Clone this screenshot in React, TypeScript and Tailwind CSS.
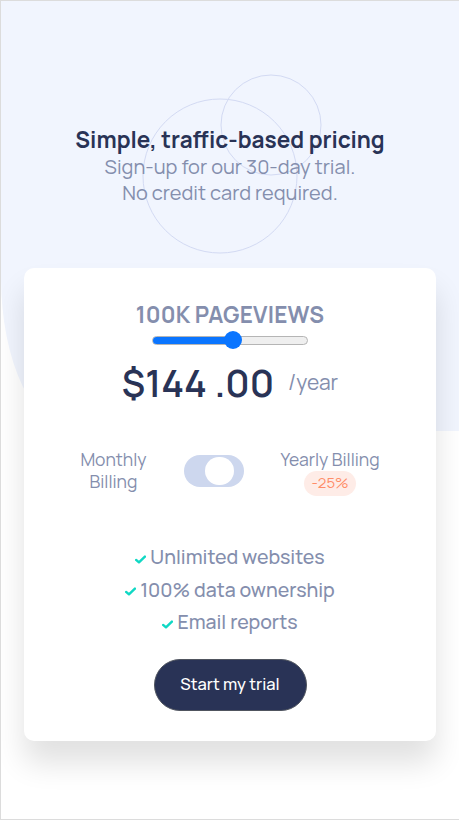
import { useState } from 'react';

const features = ['Unlimited websites', '100% data ownership', 'Email reports'];

// small teal tick used before each feature line
const Check = () => (
  <svg width="11" height="9" viewBox="0 0 10 8" className="mr-[4px] mt-[4px] shrink-0">
    <path d="M1 4.4 L3.6 6.6 L9 1.4" fill="none" stroke="#10d8c4" strokeWidth="2.2" strokeLinecap="round" strokeLinejoin="round" />
  </svg>
);

const App = () => {
  const [yearly, setYearly] = useState(true);
  const progress = 52;

  return (
    <div className="relative min-h-[820px] w-full overflow-hidden border-t border-l border-b border-[#dcdcdc] bg-white font-['Manrope','Inter',sans-serif]">
      {/* background shape + circles */}
      <div className="absolute left-0 right-0 top-0 h-[430px] rounded-bl-[74px_153px] bg-[#f1f5fe]" />
      <svg className="absolute left-0 top-0" width="459" height="300">
        <circle cx="270" cy="124" r="50" fill="none" stroke="#d3daf3" strokeWidth="1" />
        <circle cx="219" cy="175" r="77" fill="none" stroke="#d3daf3" strokeWidth="1" />
      </svg>

      <div className="relative flex flex-col items-center">
        {/* header */}
        <div className="mt-[125px] flex flex-col items-center text-center">
          <h1 className="text-[22.5px] font-bold leading-[28px] text-[#293356]">Simple, traffic-based pricing</h1>
          <p className="text-[20px] leading-[26px] text-[#848ead]">
            Sign-up for our 30-day trial.
            <br />
            No credit card required.
          </p>
        </div>

        {/* card */}
        <div className="mt-[62px] flex w-[412px] flex-col items-center rounded-[10px] bg-white pb-[30px] pt-[32px] shadow-[0_22px_30px_rgba(0,0,0,0.12)]">
          <div className="text-[22.5px] font-bold leading-[30px] tracking-[0.2px] text-[#848ead]">100K PAGEVIEWS</div>

          <div className="relative mt-[1px] flex h-[18px] w-[156px] items-center">
            <div className="flex h-[9px] w-full overflow-hidden rounded-full border border-[#b5b5b5] bg-[#efefef]">
              <div className="h-full bg-[#0a75ff]" style={{ width: `${progress}%` }} />
            </div>
            <div
              className="absolute top-0 h-[18px] w-[18px] -translate-x-1/2 rounded-full bg-[#0a75ff]"
              style={{ left: `${progress}%` }}
            />
          </div>

          <div className="mt-[9px] flex items-center">
            <span className="text-[38px] font-semibold leading-[48px] text-[#293356]">$144 .00</span>
            <span className="ml-[14px] mt-[1px] text-[21px] text-[#848ead]">/year</span>
          </div>

          {/* billing toggle */}
          <div className="mt-[42px] flex items-start gap-[37px]">
            <span className="text-center text-[17.5px] leading-[22px] text-[#848ead]">
              Monthly
              <br />
              Billing
            </span>
            <button
              onClick={() => setYearly(!yearly)}
              className="mt-[7px] flex h-[32px] w-[60px] items-center rounded-full bg-[#cdd7ee] pl-[21px]"
            >
              <span className={`h-[28px] w-[29px] rounded-full bg-white ${yearly ? '' : '-ml-[16px]'}`} />
            </button>
            <div className="flex flex-col items-center">
              <span className="text-[17.5px] leading-[22px] text-[#848ead]">Yearly Billing</span>
              <span className="mt-[1px] flex h-[25px] w-[52px] items-center justify-center rounded-full bg-[#feece7] text-[15px] text-[#ff8d68]">-25%</span>
            </div>
          </div>

          {/* features */}
          <ul className="mt-[45px] flex flex-col items-center">
            {features.map((f) => (
              <li key={f} className="flex items-center text-[19.5px] font-medium leading-[32.5px] text-[#848ead]">
                <Check />
                {f}
              </li>
            ))}
          </ul>

          <button className="mt-[20px] h-[52px] w-[153px] rounded-full border border-[#50555f] bg-[#293356] text-[16.5px] font-medium text-white">
            Start my trial
          </button>
        </div>
      </div>
    </div>
  );
};

export default App;
